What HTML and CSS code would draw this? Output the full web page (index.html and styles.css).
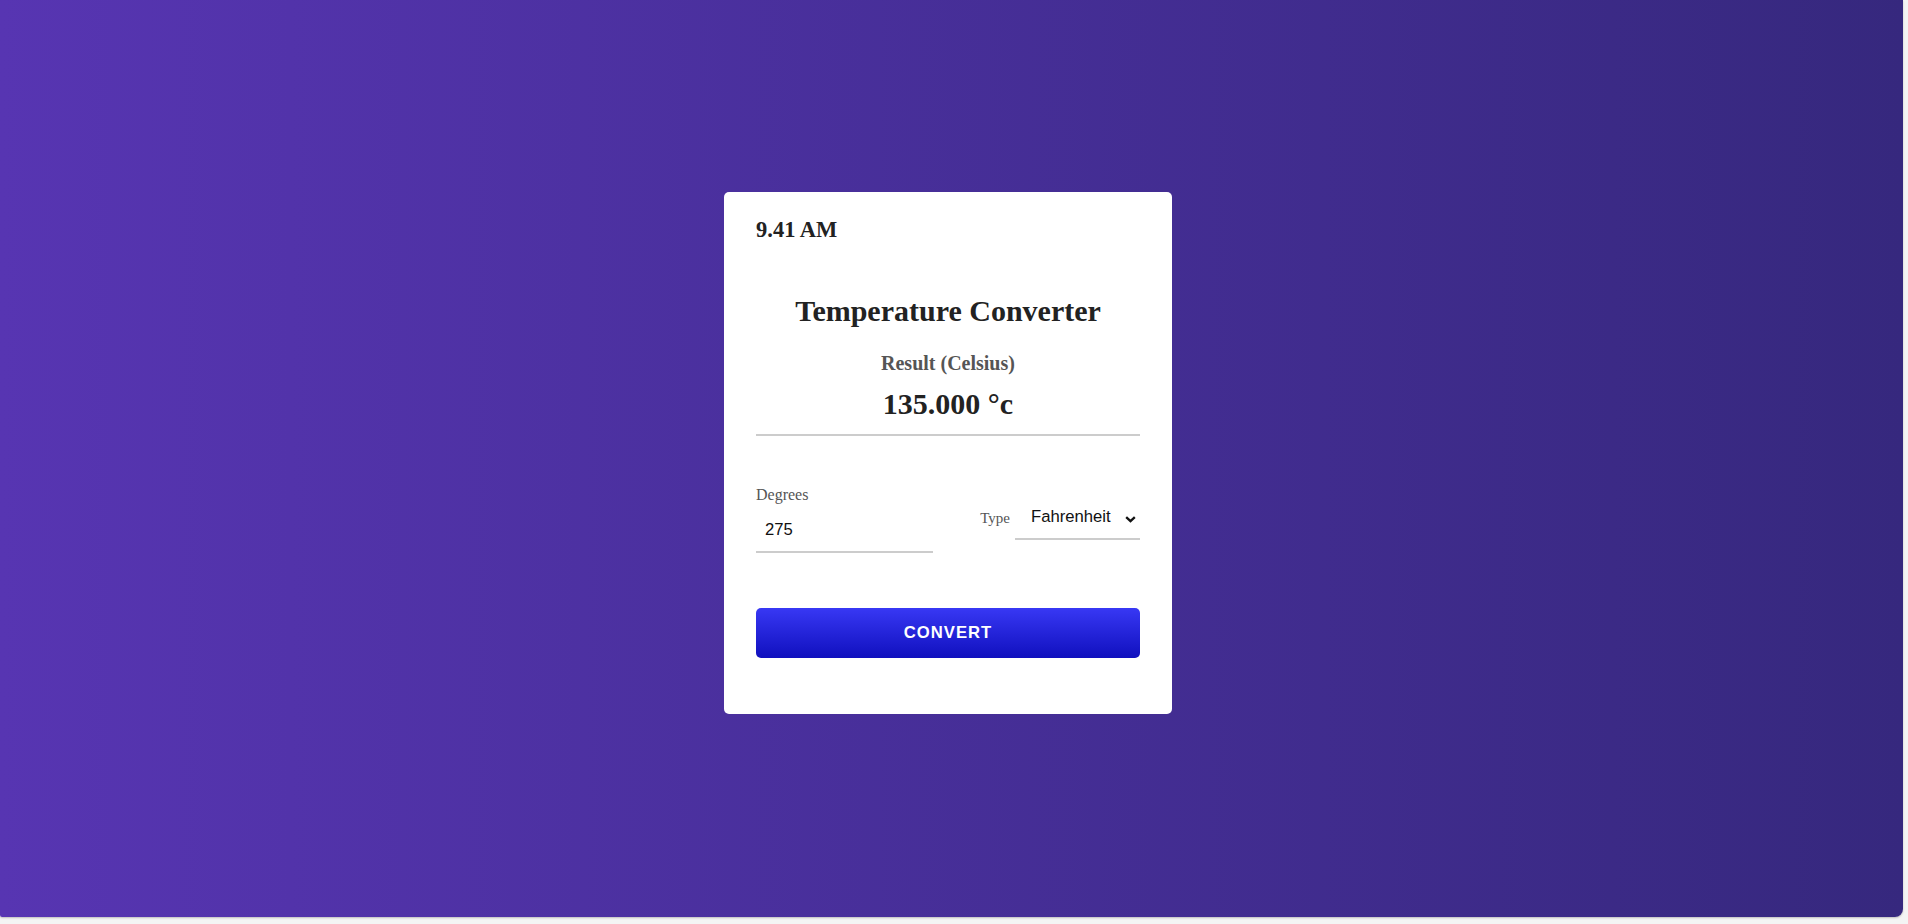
FILE: index.html
```html
<!DOCTYPE html>
<html lang="en">
<head>
<meta charset="utf-8">
<title>Temperature Converter</title>
<link rel="stylesheet" href="styles.css">
</head>
<body>
<div class="viewport">
  <main class="card">
    <div class="time">9.41 AM</div>
    <h1 class="title">Temperature Converter</h1>
    <div class="result">
      <div class="result-label">Result (Celsius)</div>
      <div class="result-value">135.000 °c</div>
    </div>
    <form class="fields">
      <div class="field">
        <label class="field-label" for="deg">Degrees</label>
        <input id="deg" class="deg-input" type="text" value="275">
      </div>
      <div class="type-group">
        <label class="type-label" for="type">Type</label>
        <div class="select-wrap">
          <select id="type" class="type-select">
            <option>Fahrenheit</option>
            <option>Kelvin</option>
          </select>
          <svg class="chev" width="11" height="7" viewBox="0 0 11 7"><path d="M1.2 1.2l4.3 4 4.3-4" fill="none" stroke="#111" stroke-width="2.3"/></svg>
        </div>
      </div>
    </form>
    <button class="convert" type="button">CONVERT</button>
  </main>
</div>
</body>
</html>
```

FILE: styles.css
```css
* { box-sizing: border-box; }

html, body {
  margin: 0;
  padding: 0;
}

body {
  width: 1908px;
  height: 924px;
  background: #f4f4f4;
  overflow: hidden;
  font-family: "Liberation Serif", "Times New Roman", serif;
}

.viewport {
  width: 1903px;
  height: 917px;
  background: linear-gradient(to right, #5735b2, #36287e);
  border-radius: 0 0 8px 2px;
  box-shadow: 0 1px 2px rgba(0, 0, 0, 0.22);
  display: flex;
  align-items: center;
  justify-content: center;
  padding-right: 7px;
  padding-bottom: 11px;
}

.card {
  width: 448px;
  background: #fff;
  border-radius: 5px;
  padding: 25px 32px 56px;
  display: flex;
  flex-direction: column;
}

.time {
  font-size: 22.5px;
  line-height: 26px;
  font-weight: bold;
  color: #222;
}

.title {
  margin: 51px 0 0;
  font-size: 30px;
  line-height: 34px;
  font-weight: bold;
  text-align: center;
  color: #222;
}

.result {
  margin-top: 23px;
  padding-bottom: 13px;
  border-bottom: 2px solid #cccccc;
  text-align: center;
}

.result-label {
  font-size: 20px;
  line-height: 24px;
  font-weight: bold;
  color: #555;
}

.result-value {
  margin-top: 12px;
  font-size: 30px;
  line-height: 34px;
  font-weight: bold;
  color: #222;
}

.fields {
  margin: 50px 0 0;
  display: flex;
  justify-content: space-between;
  align-items: center;
}

.field {
  display: flex;
  flex-direction: column;
}

.field-label {
  font-size: 16px;
  line-height: 18px;
  color: #555;
  margin-bottom: 8px;
}

.deg-input {
  width: 177px;
  border: none;
  border-bottom: 2px solid #cccccc;
  padding: 8px 9px 12px;
  font-family: "Liberation Sans", Arial, sans-serif;
  font-size: 16.67px;
  line-height: 19px;
  color: #111;
  background: transparent;
  outline: none;
  border-radius: 0;
}

.type-group {
  display: flex;
  align-items: center;
  gap: 5px;
}

.type-label {
  font-size: 15px;
  line-height: 18px;
  color: #555;
  margin-bottom: 3px;
}

.select-wrap {
  position: relative;
  width: 125px;
}

.type-select {
  appearance: none;
  -webkit-appearance: none;
  display: block;
  width: 125px;
  border: none;
  border-bottom: 2px solid #cccccc;
  border-radius: 0;
  padding: 8px 20px 12px 16px;
  font-family: "Liberation Sans", Arial, sans-serif;
  font-size: 16.67px;
  line-height: 19px;
  color: #111;
  background: transparent;
  outline: none;
}

.chev {
  position: absolute;
  right: 4px;
  top: 17px;
  pointer-events: none;
}

.convert {
  margin-top: 55px;
  height: 50px;
  width: 100%;
  border: none;
  border-radius: 5px;
  background: linear-gradient(#3838f4, #1010be);
  color: #fff;
  font-family: "Liberation Sans", Arial, sans-serif;
  font-size: 16.67px;
  font-weight: bold;
  letter-spacing: 1px;
  cursor: pointer;
}
```
